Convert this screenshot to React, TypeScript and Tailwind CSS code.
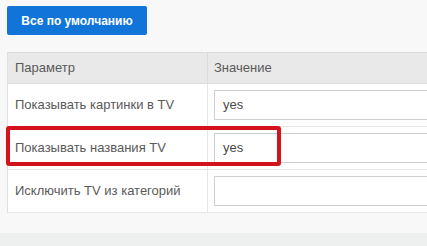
export default function App() {
  const rows = [
    { name: 'Показывать картинки в TV', value: 'yes', marked: false },
    { name: 'Показывать названия TV', value: 'yes', marked: true },
    { name: 'Исключить TV из категорий', value: '', marked: false },
  ];

  return (
    <div className="w-[427px] h-[246px] overflow-hidden bg-[#f8f8f8] text-[13px] text-[#5a5a5a] flex flex-col" style={{ fontFamily: '"Liberation Sans", Arial, sans-serif' }}>
      <div className="pl-[7px] pt-[6px]">
        <button className="h-[29px] w-[140px] bg-[#1074d8] text-white font-bold text-[12px] rounded-[2px]">
          Все по умолчанию
        </button>
      </div>
      <div className="ml-[7px] mt-[17px] w-[440px] border-l border-[#dfdfdf] bg-white">
        <div className="flex h-[32px] bg-[#e9e9e9] border-y border-[#dcdcdc]">
          <div className="w-[200px] border-r border-[#dcdcdc] pl-[7px] flex items-center">Параметр</div>
          <div className="flex-1 pl-[6px] flex items-center">Значение</div>
        </div>
        {rows.map((r) => (
          <div key={r.name} className="relative flex h-[43px] border-b border-[#e6e6e6]">
            <div className="w-[200px] border-r border-[#e6e6e6] pl-[7px] flex items-center">{r.name}</div>
            <div className="flex-1 pl-[6px] flex items-center">
              <div className="h-[30px] w-full border border-[#d0d0d0] flex items-center pl-[8px] text-[#4a4a4a]">{r.value}</div>
            </div>
            {r.marked && (
              <div className="absolute left-[-2px] top-[-1px] w-[275px] h-[40px] border-[4px] border-[#d4121c] rounded-[3px]" />
            )}
          </div>
        ))}
      </div>
      <div className="mt-[20px] flex-1 bg-[#eef0f0]" />
    </div>
  );
}
